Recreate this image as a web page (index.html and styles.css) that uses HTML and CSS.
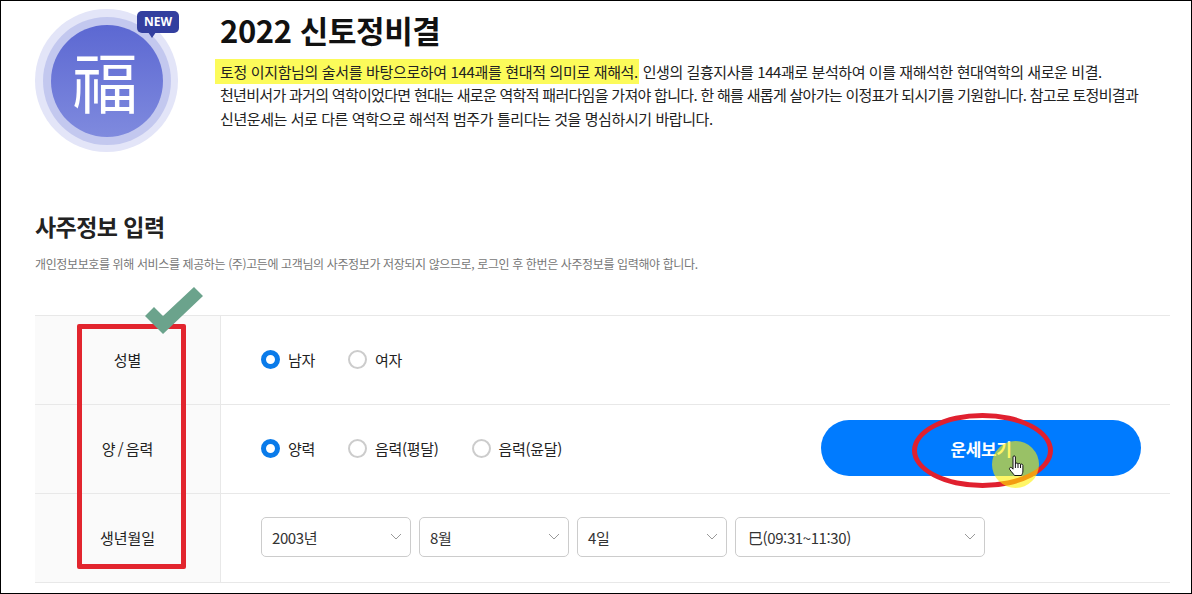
FILE: index.html
```html
<!DOCTYPE html>
<html lang="ko">
<head>
  <meta charset="UTF-8" />
  <title>2022 신토정비결</title>
  <link rel="stylesheet" href="styles.css">
</head>
<body>
  <div class="frame">
    <div class="hero">
      <div class="logo">
        <div class="ring-outer">
          <div class="ring-inner">
            <div class="disc">福</div>
          </div>
        </div>
        <span class="badge">NEW</span>
      </div>
      <div class="intro">
        <h1>2022 신토정비결</h1>
        <p><mark>토정 이지함님의 술서를 바탕으로하여 144괘를 현대적 의미로 재해석.</mark> 인생의 길흉지사를 144괘로 분석하여 이를 재해석한 현대역학의 새로운 비결.<br><span class="tight">천년비서가 과거의 역학이었다면 현대는 새로운 역학적 패러다임을 가져야 합니다. 한 해를 새롭게 살아가는 이정표가 되시기를 기원합니다. 참고로 토정비결과</span><br>신년운세는 서로 다른 역학으로 해석적 범주가 틀리다는 것을 명심하시기 바랍니다.</p>
      </div>
    </div>

    <h2>사주정보 입력</h2>
    <p class="notice">개인정보보호를 위해 서비스를 제공하는 (주)고든에 고객님의 사주정보가 저장되지 않으므로, 로그인 후 한번은 사주정보를 입력해야 합니다.</p>

    <div class="form-table">
      <div class="row">
        <div class="head">성별</div>
        <div class="cell">
          <label class="radio"><i class="dot on"></i>남자</label>
          <label class="radio"><i class="dot"></i>여자</label>
        </div>
      </div>
      <div class="row">
        <div class="head slash">양 / 음력</div>
        <div class="cell">
          <label class="radio"><i class="dot on"></i>양력</label>
          <label class="radio"><i class="dot"></i>음력(평달)</label>
          <label class="radio"><i class="dot"></i>음력(윤달)</label>
          <button class="submit">운세보기</button>
        </div>
      </div>
      <div class="row">
        <div class="head">생년월일</div>
        <div class="cell selects">
          <div class="select">2003년<svg viewBox="0 0 12 7"><path d="M1 1l5 5 5-5"/></svg></div>
          <div class="select">8월<svg viewBox="0 0 12 7"><path d="M1 1l5 5 5-5"/></svg></div>
          <div class="select">4일<svg viewBox="0 0 12 7"><path d="M1 1l5 5 5-5"/></svg></div>
          <div class="select wide">巳(09:31~11:30)<svg viewBox="0 0 12 7"><path d="M1 1l5 5 5-5"/></svg></div>
        </div>
      </div>
    </div>

    <!-- 캡처 위에 덧그린 표시들 -->
    <div class="mark-box"></div>
    <svg class="mark-check" viewBox="0 0 60 50"><path d="M1 29L19 47 59 9 50 0 19 29 10 20z"/></svg>
    <div class="mark-ellipse"></div>
    <div class="mark-cursor"></div>
    <svg class="mark-hand" viewBox="0 0 18 24">
      <path d="M5 2c0-1.500 2.400-1.500 2.400 0v7c.3-1.400 2.500-1.300 2.600.2.400-1.200 2.400-1.100 2.500.4.500-.9 2.300-.7 2.400.8v5.600c0 2-.8 3-1.400 4.500H6.500C5.500 19 3.800 17.300 1.800 14.600.7 13 2.500 11.500 4 13l1 1.200z"/>
      <path d="M7.400 9v4M10 9.200V13M12.500 9.600V13"/>
    </svg>
  </div>
</body>
</html>
```

FILE: styles.css
```css
html, body {
  margin: 0;
  padding: 0;
  background: #fff;
}

body {
  font-family: "Noto Sans CJK KR", "Noto Sans", sans-serif;
  color: #222;
}

.frame {
  position: relative;
  box-sizing: border-box;
  width: 1192px;
  height: 594px;
  padding: 8px 21px 0 34px;
  border: 1px solid #000;
  overflow: hidden;
}

.hero {
  display: flex;
  gap: 42px;
}

.logo {
  position: relative;
  flex: none;
  width: 143px;
  height: 143px;
}

.ring-outer, .ring-inner, .disc {
  display: flex;
  align-items: center;
  justify-content: center;
  border-radius: 50%;
}

.ring-outer {
  width: 143px;
  height: 143px;
  background: #e3e5f8;
}

.ring-inner {
  width: 128px;
  height: 128px;
  background: #c3c8ef;
}

.disc {
  box-sizing: border-box;
  width: 112px;
  height: 112px;
  padding: 0 3px 4px 0;
  background: linear-gradient(#5c68d2, #7f8ade);
  color: #fff;
  font-size: 66px;
  font-weight: 400;
  line-height: 1;
}

.badge {
  position: absolute;
  top: 2px;
  left: 102px;
  width: 42px;
  height: 22px;
  background: #333f9f;
  border-radius: 5px;
  color: #fff;
  font-family: "Noto Sans", sans-serif;
  font-size: 12px;
  font-weight: 700;
  line-height: 22px;
  text-align: center;
}

.badge::after {
  content: "";
  position: absolute;
  left: 11px;
  top: 21px;
  border: 4px solid transparent;
  border-top: 6px solid #333f9f;
}

.intro {
  flex: 1;
}

h1 {
  margin: 0;
  font-size: 31px;
  font-weight: 700;
  line-height: 42px;
  letter-spacing: -0.4px;
  color: #111;
}

.intro p {
  margin: 8.5px 0 0;
  font-size: 15px;
  line-height: 23.5px;
  letter-spacing: -0.42px;
  white-space: nowrap;
}

.intro .tight {
  letter-spacing: -0.7px;
}

mark {
  background: #fcfb5a;
  color: #222;
  padding: 2px 1px 2px 5px;
  margin-left: -5px;
  letter-spacing: -0.35px;
}

h2 {
  margin: 58px 0 0;
  font-size: 23px;
  font-weight: 700;
  line-height: 32px;
  letter-spacing: -0.55px;
}

.notice {
  margin: 13px 0 0;
  font-size: 12px;
  line-height: 17px;
  letter-spacing: -0.38px;
  color: #777;
}

.form-table {
  margin-top: 43px;
  border-top: 1px solid #e8e8e8;
}

.row {
  display: flex;
  height: 88px;
  border-bottom: 1px solid #e8e8e8;
}

.head {
  flex: none;
  display: flex;
  align-items: center;
  justify-content: center;
  box-sizing: border-box;
  width: 186px;
  padding-bottom: 2px;
  background: #fafafa;
  border-right: 1px solid #e8e8e8;
  font-size: 15px;
}

.head.slash {
  word-spacing: -2px;
}

.cell {
  flex: 1;
  display: flex;
  align-items: center;
  padding: 0 29px 2px 40px;
}

.radio {
  display: flex;
  align-items: center;
  gap: 8px;
  margin-right: 33px;
  font-size: 15px;
  letter-spacing: -0.3px;
}

.dot {
  box-sizing: border-box;
  width: 19px;
  height: 19px;
  border: 2px solid #ccc;
  border-radius: 50%;
  background: #fff;
}

.dot.on {
  border: 5px solid #0a7bea;
}

.submit {
  margin-left: auto;
  width: 320px;
  height: 56px;
  border: none;
  border-radius: 28px;
  background: #007bff;
  color: #fff;
  font-family: inherit;
  font-size: 17px;
  font-weight: 700;
  letter-spacing: -0.4px;
}

.selects {
  gap: 8px;
}

.select {
  position: relative;
  box-sizing: border-box;
  width: 150px;
  height: 40px;
  padding-left: 10px;
  border: 1px solid #ccc;
  border-radius: 5px;
  font-size: 15px;
  line-height: 39px;
  letter-spacing: -0.4px;
  color: #333;
}

.select.wide {
  width: 250px;
  padding-left: 12px;
}

.select svg {
  position: absolute;
  right: 8px;
  top: 15px;
  width: 12px;
  height: 7px;
  fill: none;
  stroke: #999;
  stroke-width: 1;
}

.mark-box {
  position: absolute;
  left: 76px;
  top: 323px;
  box-sizing: border-box;
  width: 109px;
  height: 245px;
  border: 5px solid #e2252e;
  border-radius: 2px;
}

.mark-check {
  position: absolute;
  left: 143px;
  top: 286px;
  width: 60px;
  height: 50px;
  fill: #6ba38c;
}

.mark-ellipse {
  position: absolute;
  left: 911px;
  top: 412px;
  box-sizing: border-box;
  width: 141px;
  height: 75px;
  border: 5px solid #e0202f;
  border-radius: 50%;
}

.mark-cursor {
  position: absolute;
  left: 991px;
  top: 440px;
  width: 47px;
  height: 47px;
  border-radius: 50%;
  background: rgba(255, 240, 0, 0.6);
}

.mark-hand {
  position: absolute;
  left: 1007px;
  top: 454px;
  width: 18px;
  height: 24px;
  fill: #fff;
  stroke: #111;
  stroke-width: 1;
}
```
